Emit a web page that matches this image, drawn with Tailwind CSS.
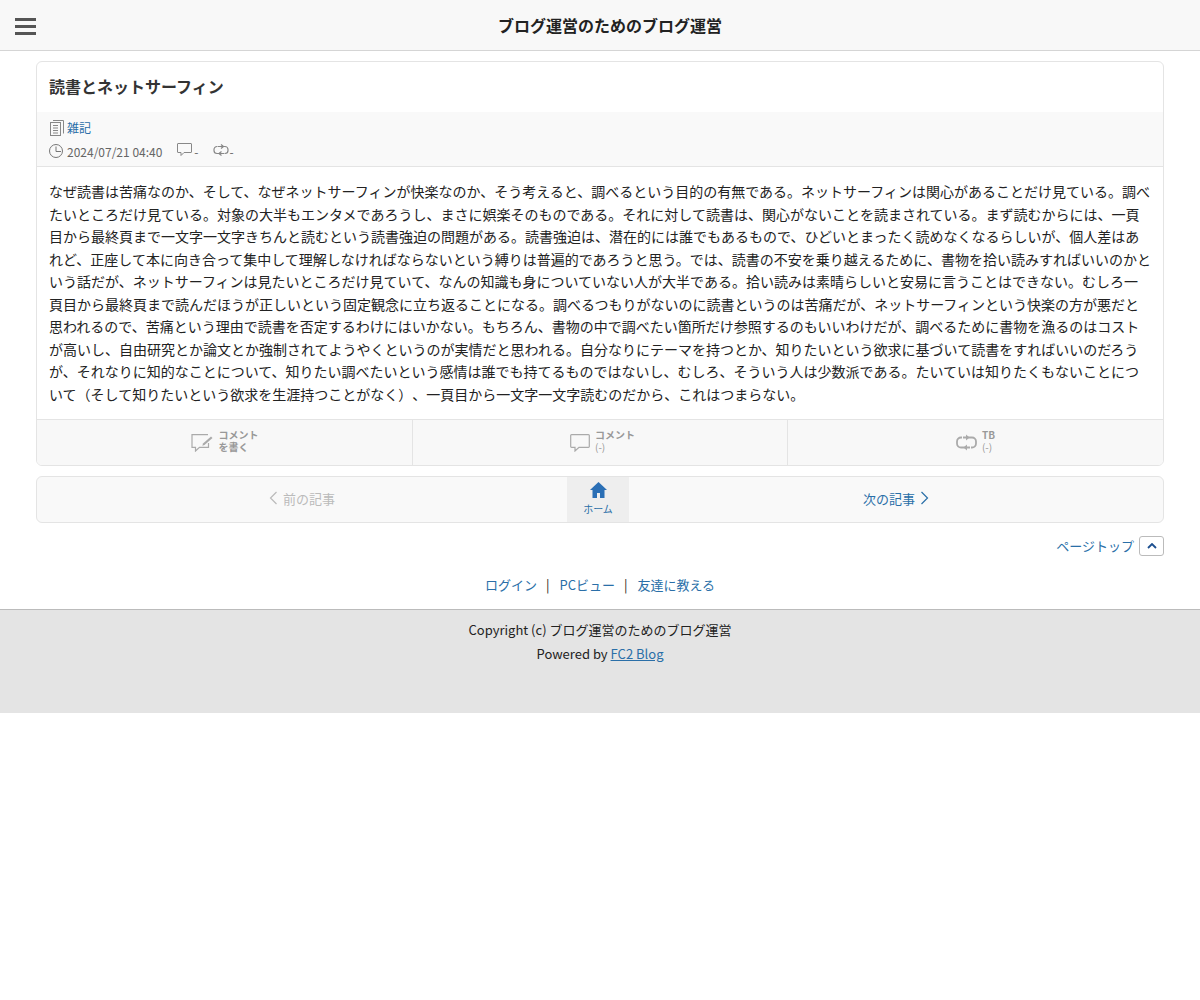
<!DOCTYPE html>
<html lang="ja">
<head>
  <meta charset="UTF-8" />
  <title>ブログ運営のためのブログ運営</title>
  <script src="https://cdn.jsdelivr.net/npm/@tailwindcss/browser@4"></script>
</head>
<body class="bg-white text-[#222] font-['Noto_Sans_CJK_JP','Noto_Sans',sans-serif] [text-spacing-trim:space-all]">
  <header class="h-[51px] bg-[#f8f8f8] border-b border-[#d5d5d5] relative flex items-center justify-center pl-[20px]">
    <button class="absolute left-[15px] top-[18px] w-[21px] h-[17px] flex flex-col justify-between">
      <span class="block h-[3px] w-full bg-[#555]"></span>
      <span class="block h-[3px] w-full bg-[#555]"></span>
      <span class="block h-[3px] w-full bg-[#555]"></span>
    </button>
    <h1 class="text-base font-bold leading-none">ブログ運営のためのブログ運営</h1>
  </header>

  <main class="px-9 pt-[10px]">
    <article class="border border-[#e4e4e4] rounded-md overflow-hidden">
      <h2 class="h-[50px] px-[12px] pb-[2px] flex items-center text-base font-bold text-[#333]">読書とネットサーフィン</h2>
      <div class="h-[55px] bg-[#f9f9f9] border-b border-[#e4e4e4] px-[12px] pt-[5px] text-xs text-[#666]">
        <div class="h-[22px] flex items-center gap-[3px]">
          <svg class="w-[14px] h-[16px] ml-[1px] -mt-[1px]" viewBox="0 0 14 16" fill="none" stroke="#888" stroke-width="1"><rect x=".5" y="2.500" width="10" height="13"/><path d="M3 .5h10.500v13M3 5.500h5M3 8h5M3 10.500h5M3 13h5"/></svg>
          <a class="text-[#2a6fa8]">雑記</a>
        </div>
        <div class="h-[22px] mt-[2px] flex items-center">
          <svg class="w-[14px] h-[14px] mr-[4px] -mt-[3px]" viewBox="0 0 14 14" fill="none" stroke="#777" stroke-width="1"><circle cx="7" cy="7" r="6.500"/><path d="M7 2.500V7.500H12"/></svg>
          <span>2024/07/21 04:40</span>
          <svg class="w-[15px] h-[14px] ml-[15px] mr-[2px] -mt-[4px]" viewBox="0 0 15 14" fill="none" stroke="#888" stroke-width="1"><path d="M1 .5h13a.5.5 0 0 1 .5.500v8a.5.5 0 0 1-.5.500H7L4 12.500V9.500H1a.5.5 0 0 1-.5-.5V1a.5.5 0 0 1 .5-.5z"/></svg>
          <span>-</span>
          <svg class="w-[16px] h-[13px] ml-[14px] mr-[1px] -mt-[4px]" viewBox="0 0 16 13" fill="none" stroke="#888" stroke-width="1.200"><path d="M4.500 2.500H4a3 3 0 0 0-3 3v1a3 3 0 0 0 3 3h7M11.500 9.500h.5a3 3 0 0 0 3-3v-1a3 3 0 0 0-3-3H5"/><path d="M8 .5l2.500 2-2.500 2M8.500 7.500l-2.500 2 2.500 2"/></svg>
          <span>-</span>
        </div>
      </div>
      <p class="pl-[12px] pr-[12px] pt-[13px] pb-[14px] text-sm leading-[22.5px] text-[#222]">なぜ読書は苦痛なのか、そして、なぜネットサーフィンが快楽なのか、そう考えると、調べるという目的の有無である。ネットサーフィンは関心があることだけ見ている。調べたいところだけ見ている。対象の大半もエンタメであろうし、まさに娯楽そのものである。それに対して読書は、関心がないことを読まされている。まず読むからには、一頁目から最終頁まで一文字一文字きちんと読むという読書強迫の問題がある。読書強迫は、潜在的には誰でもあるもので、ひどいとまったく読めなくなるらしいが、個人差はあれど、正座して本に向き合って集中して理解しなければならないという縛りは普遍的であろうと思う。では、読書の不安を乗り越えるために、書物を拾い読みすればいいのかという話だが、ネットサーフィンは見たいところだけ見ていて、なんの知識も身についていない人が大半である。拾い読みは素晴らしいと安易に言うことはできない。むしろ一頁目から最終頁まで読んだほうが正しいという固定観念に立ち返ることになる。調べるつもりがないのに読書というのは苦痛だが、ネットサーフィンという快楽の方が悪だと思われるので、苦痛という理由で読書を否定するわけにはいかない。もちろん、書物の中で調べたい箇所だけ参照するのもいいわけだが、調べるために書物を漁るのはコストが高いし、自由研究とか論文とか強制されてようやくというのが実情だと思われる。自分なりにテーマを持つとか、知りたいという欲求に基づいて読書をすればいいのだろうが、それなりに知的なことについて、知りたい調べたいという感情は誰でも持てるものではないし、むしろ、そういう人は少数派である。たいていは知りたくもないことについて（そして知りたいという欲求を生涯持つことがなく）、一頁目から一文字一文字読むのだから、これはつまらない。</p>
      <div class="h-[46px] bg-[#f8f8f8] border-t border-[#e4e4e4] grid grid-cols-[376px_375px_1fr] text-[10px] leading-[12px] text-[#999]">
        <a class="flex items-center justify-center gap-[5px] border-r border-[#e4e4e4]">
          <svg class="w-[23px] h-[18px]" viewBox="0 0 23 18" fill="none" stroke="#aaa" stroke-width="1.200"><path d="M17 .7H1v12.600h3.500v3.700l4-3.700h9V9"/><path d="M12 9.500l8-7 1.500 1.500-8 7-2.200.7z" fill="#aaa" stroke="none"/></svg>
          <span class="font-bold pb-[3px]">コメント<br />を書く</span>
        </a>
        <a class="flex items-center justify-center gap-[5px] border-r border-[#e4e4e4] pl-[5px]">
          <svg class="w-[20px] h-[18px]" viewBox="0 0 20 18" fill="none" stroke="#aaa" stroke-width="1.200"><path d="M1.500.7h17a.8.8 0 0 1 .8.800v11a.8.8 0 0 1-.8.800H9l-4 3.700v-3.700H1.500a.8.8 0 0 1-.8-.8v-11a.8.8 0 0 1 .8-.8z"/></svg>
          <span class="pb-[3px]"><b>コメント</b><br />(-)</span>
        </a>
        <a class="flex items-center justify-center gap-[5px]">
          <svg class="w-[21px] h-[17px]" viewBox="0 0 21 17" fill="none" stroke="#aaa" stroke-width="1.800"><path d="M6 3.500H5a4 4 0 0 0-4 4v2a4 4 0 0 0 4 4h9M15 13.500h1a4 4 0 0 0 4-4v-2a4 4 0 0 0-4-4H7"/><path d="M10 .5l3.500 3-3.500 3z" fill="#aaa" stroke="none"/><path d="M11 10.500l-3.500 3 3.500 3z" fill="#aaa" stroke="none"/></svg>
          <span class="pb-[3px]"><b>TB</b><br />(-)</span>
        </a>
      </div>
    </article>

    <nav class="mt-[10px] h-[47px] bg-[#f9f9f9] border border-[#e4e4e4] rounded-md overflow-hidden flex text-[13px]">
      <a class="w-[530px] flex items-center justify-center gap-[5px] pb-[2px] text-[#bbb]">
        <svg class="w-[9px] h-[14px] -mt-[1px]" viewBox="0 0 9 14" fill="none" stroke="#bbb" stroke-width="1.200"><path d="M7.500 1L1.500 7l6 6"/></svg>
        前の記事
      </a>
      <a class="w-[62px] bg-[#eeeeee] flex flex-col items-center pt-[5px] text-[#2a6fa8]">
        <svg class="w-[17px] h-[16px]" viewBox="0 0 17 16" fill="#2b6fb5"><path d="M8.500 0L0 8h2.500v8h4.500v-5h3v5h4.500V8H17z"/></svg>
        <span class="text-[10px] leading-[12px] mt-[5px]">ホーム</span>
      </a>
      <a class="flex-1 flex items-center justify-center gap-[5px] pb-[2px] text-[#2a6fa8]">
        次の記事
        <svg class="w-[9px] h-[14px] -mt-[1px]" viewBox="0 0 9 14" fill="none" stroke="#2a6fa8" stroke-width="1.200"><path d="M1.500 1l6 6-6 6"/></svg>
      </a>
    </nav>

    <div class="mt-[13px] h-[20px] flex items-center justify-end gap-[5px] text-[13px] text-[#2a6fa8]">
      <a>ページトップ</a>
      <span class="w-[25px] h-[20px] border border-[#bbb] rounded-[3px] flex items-center justify-center">
        <svg class="w-[10px] h-[6px]" viewBox="0 0 10 6" fill="none" stroke="#1c4f8f" stroke-width="1.800"><path d="M1 5l4-4 4 4"/></svg>
      </span>
    </div>

    <div class="mt-[19px] h-[20px] flex items-center justify-center text-[13px] text-[#2a6fa8]">
      <a>ログイン</a><span class="text-[#222] ml-[9px] mr-[10px]">|</span>
      <a>PCビュー</a><span class="text-[#222] ml-[9px] mr-[10px]">|</span>
      <a>友達に教える</a>
    </div>
  </main>

  <footer class="mt-[14px] h-[104px] bg-[#e4e4e4] border-t border-[#bbb] pt-[8px] text-center text-[13px] leading-[24px] text-[#222]">
    <p>Copyright (c) ブログ運営のためのブログ運営</p>
    <p>Powered by <a class="text-[#2a6fa8] underline">FC2 Blog</a></p>
  </footer>
</body>
</html>
